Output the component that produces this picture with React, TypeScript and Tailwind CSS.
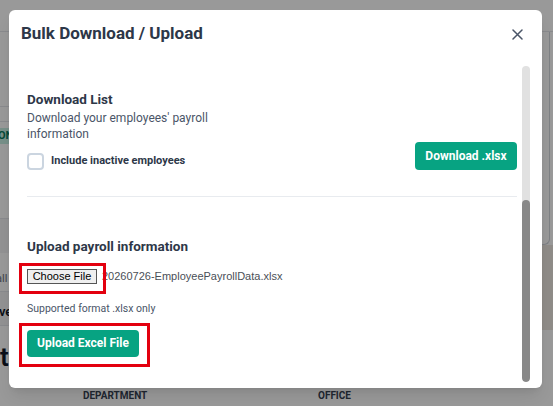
import React from "react";

const ui = { fontFamily: "Roboto, 'Noto Sans', sans-serif" };
const native = { fontFamily: "'Liberation Sans', Arial, sans-serif" };

function CloseIcon() {
  return (
    <svg width="11" height="11" viewBox="0 0 11 11" fill="none">
      <path d="M1 1L10 10M10 1L1 10" stroke="#4a5568" strokeWidth="1.5" strokeLinecap="round" />
    </svg>
  );
}

function Highlight({ children, box }: { children: React.ReactNode; box: string }) {
  return (
    <span className="relative inline-flex">
      {children}
      <span className={`pointer-events-none absolute border-[3px] border-[#e3000f] ${box}`} />
    </span>
  );
}

function BackgroundPage() {
  return (
    <div className="flex h-full w-full flex-col bg-white" style={ui}>
      <div className="h-[32px] shrink-0 border-b border-gray-200" />
      <div className="flex flex-1">
        <div className="flex flex-1 flex-col">
          <div className="h-[75px] border-b border-gray-200" />
          <div className="h-[15px] border-b border-gray-200" />
          <div className="flex h-[28px] items-center">
            <span className="ml-[-6px] rounded bg-[#c6f0e4] px-1 text-[11px] font-bold text-[#0b7a5f]">ON</span>
          </div>
          <div className="h-[69px] border-b border-gray-200" />
          <div className="h-[34px] bg-gray-100" />
          <div className="flex h-[39px] items-end pb-[4px] border-b border-gray-200">
            <span className="ml-[-4px] text-[11px] text-gray-500">all ·</span>
          </div>
          <div className="flex h-[34px] items-center bg-gray-100 border-b border-gray-200 pt-[6px]">
            <span className="ml-[-8px] text-[13px] font-semibold text-gray-900">ave</span>
          </div>
          <div className="flex h-[54px] items-center pt-[8px]">
            <span className="ml-0 text-[26px] font-semibold text-gray-900">t</span>
          </div>
          <div className="flex h-[30px] items-center text-[10px] font-bold text-gray-700">
            <span className="ml-[83px] w-[235px]">DEPARTMENT</span>
            <span>OFFICE</span>
          </div>
        </div>
        <div className="flex w-[23px] flex-col">
          <div className="mr-[3px] h-[213px] rounded-br-md border-r border-b border-gray-300 bg-white" />
          <div className="h-[85px] bg-[#eeeae3]" />
        </div>
      </div>
    </div>
  );
}

export default function App() {
  return (
    <div className="relative h-[406px] w-[553px] overflow-hidden">
      <BackgroundPage />
      <div className="absolute inset-0 bg-black/40" />
      <div
        className="absolute left-[9px] top-[10px] flex h-[378px] w-[533px] flex-col rounded-md bg-white shadow-lg"
        style={ui}
      >
        <div className="flex h-[48px] items-center justify-between pl-[12px] pr-[17px]">
          <h2 className="text-[17px] font-bold text-[#2d3748]">Bulk Download / Upload</h2>
          <button className="flex h-[16px] w-[16px] items-center justify-center">
            <CloseIcon />
          </button>
        </div>
        <div className="flex min-h-0 flex-1 pb-[6px] pt-[8px]">
          <div className="flex-1 pl-[18px] pr-[5px]">
            <div className="flex items-end justify-between pt-[23px]">
              <div className="w-[240px]">
                <h3 className="text-[13.5px] font-bold leading-[20px] text-[#2d3748]">Download List</h3>
                <p className="mt-[1px] text-[12px] leading-[16px] text-[#4a5568]">
                  Download your employees' payroll information
                </p>
                <label className="mt-[11px] flex items-center gap-[7px]">
                  <span className="h-[17px] w-[17px] rounded-[4px] border-2 border-[#cbd5e0] bg-white" />
                  <span className="text-[11px] font-bold text-[#2d3748]">Include inactive employees</span>
                </label>
              </div>
              <button className="h-[28px] w-[102px] rounded-[4px] bg-[#07a382] text-[12px] font-bold text-white">
                Download .xlsx
              </button>
            </div>
            <div className="mt-[26px] h-px bg-[#e8ebef]" />
            <h3 className="mt-[39px] text-[13.5px] font-bold leading-[20px] text-[#2d3748]">
              Upload payroll information
            </h3>
            <div className="mt-[12px] flex items-center gap-[5px]">
              <Highlight box="-left-[8px] -right-[9px] -top-[6px] -bottom-[10px]">
                <span
                  className="flex h-[15px] w-[70px] items-center justify-center border border-[#555] bg-[#efefef] text-[11px] text-black"
                  style={native}
                >
                  Choose File
                </span>
              </Highlight>
              <span className="text-[11px] text-[#4a4f57]" style={native}>
                20260726-EmployeePayrollData.xlsx
              </span>
            </div>
            <p className="mt-[17px] text-[10.5px] leading-[14px] text-[#4a5568]">Supported format .xlsx only</p>
            <div className="mt-[14px]">
              <Highlight box="-left-[8px] -right-[11px] -top-[7px] -bottom-[10px]">
                <button className="h-[27px] w-[112px] rounded-[4px] bg-[#07a382] text-[12px] font-bold text-white">
                  Upload Excel File
                </button>
              </Highlight>
            </div>
          </div>
          <div className="mr-[12px] flex w-[8px] flex-col overflow-hidden rounded-full bg-[#e1e1e1]">
            <div className="h-[134px]" />
            <div className="flex-1 rounded-full bg-[#888888]" />
          </div>
        </div>
      </div>
    </div>
  );
}
